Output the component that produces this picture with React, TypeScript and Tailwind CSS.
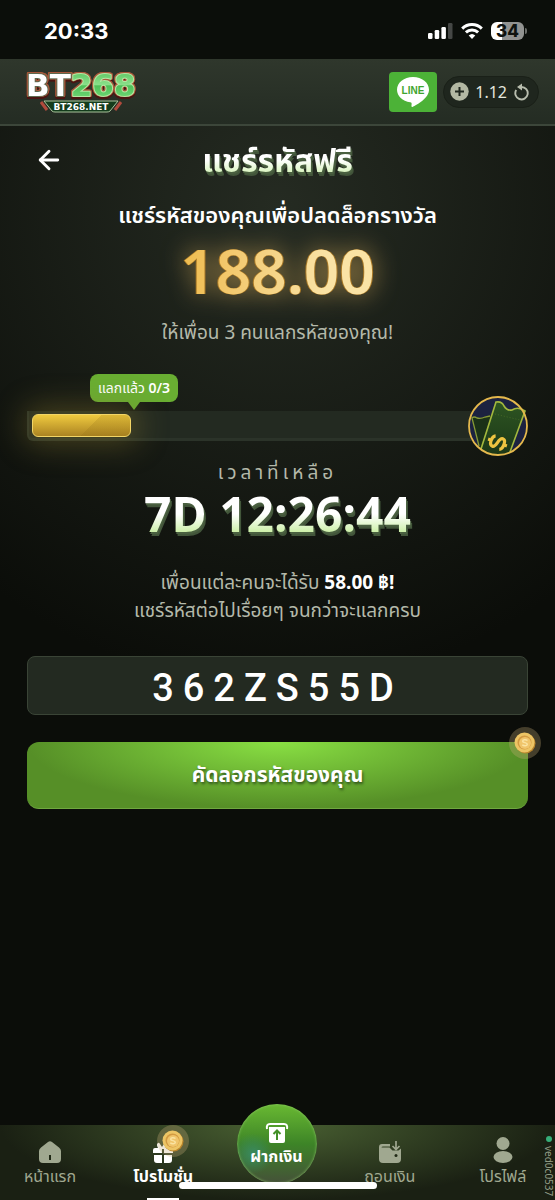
import React from 'react';
import { ArrowLeft } from 'lucide-react';
import { clsx } from 'clsx';

const TITLE_TEXT =
  'bg-gradient-to-b from-white from-50% to-[#cdf0a8] to-85% bg-clip-text text-transparent font-bold [filter:drop-shadow(1px_2px_0_#4a6040)_drop-shadow(1px_2px_0_#42553a)]';

function StatusBar() {
  return (
    <div className="flex h-[59px] items-center justify-between bg-[#0b0e0a] pl-11 pr-7 pt-[2px] text-white">
      <span className="font-[Inter,sans-serif] text-[22px] font-bold leading-6">20:33</span>
      <div className="flex items-center gap-2">
        <svg width="25" height="16" viewBox="0 0 25 16" fill="white">
          <rect x="0" y="10" width="4.500" height="6" rx="1.3" />
          <rect x="6.7" y="7" width="4.500" height="9" rx="1.3" />
          <rect x="13.4" y="4" width="4.500" height="12" rx="1.3" />
          <rect x="20" y="0" width="4.500" height="16" rx="1.3" fill="#454745" />
        </svg>
        <svg width="22" height="16" viewBox="0 0 22 16" fill="none" stroke="white" strokeWidth="3">
          <path d="M1.2 5.6a14 14 0 0 1 19.6 0" />
          <path d="M4.9 9.4a8.700 8.700 0 0 1 12.2 0" />
          <path d="M11 16l-3.300-3.500a4.800 4.800 0 0 1 6.600 0z" fill="white" stroke="none" />
        </svg>
        <div className="flex items-center gap-px">
          <div className="flex h-[18px] w-[33px] items-center justify-center rounded-md bg-[linear-gradient(to_right,#ffffff_34%,#929391_34%)] font-[Inter,sans-serif] text-[17px] font-extrabold leading-4 text-[#10130f]">
            34
          </div>
          <div className="h-[6px] w-[2px] rounded-r bg-[#6b6d6a]" />
        </div>
      </div>
    </div>
  );
}

function Logo() {
  return (
    <svg width="116" height="52" viewBox="0 0 116 52" fontFamily="DejaVu Sans, sans-serif" fontWeight="bold">
      <defs>
        <linearGradient id="logoGreen" x1="0" y1="0" x2="0" y2="1">
          <stop offset="0" stopColor="#4fbe57" />
          <stop offset="0.5" stopColor="#8be08a" />
          <stop offset="0.52" stopColor="#4dbf58" />
          <stop offset="1" stopColor="#7ce07f" />
        </linearGradient>
      </defs>
      <text
        x="2"
        y="30"
        fontSize="31"
        fill="white"
        stroke="#5d6a4f"
        strokeWidth="2"
        strokeLinejoin="round"
        paintOrder="stroke"
        className="[filter:drop-shadow(1px_0_0_#a8573a)_drop-shadow(-1px_0_0_#a8573a)_drop-shadow(0_-1px_0_#a8573a)_drop-shadow(0_2px_0_#4a1511)]"
      >
        BT
        <tspan fill="url(#logoGreen)" stroke="#b5e8a4">
          268
        </tspan>
      </text>
      <path d="M17 36l6 8M97 36l-6 8" stroke="#b04a3c" strokeWidth="3" />
      <path d="M20 35h74l-8 10q-1 1-3 1H31q-2 0-3-1z" fill="#143c1c" stroke="#a9c49b" strokeWidth="1" />
      <text x="57" y="44" fontSize="9" fill="white" textAnchor="middle">
        BT268.NET
      </text>
    </svg>
  );
}

function Header() {
  return (
    <header className="flex h-[67px] items-center justify-between border-b-2 border-[#3c463a] bg-gradient-to-b from-[#2f372c] to-[#242c23] pl-6 pr-4">
      <a href="#home" aria-label="BT268">
        <Logo />
      </a>
      <div className="flex items-center gap-[6px]">
        <a href="#line" aria-label="LINE" className="flex h-10 w-12 items-center justify-center rounded bg-[#4cb237]">
          <svg width="34" height="32" viewBox="0 0 34 32">
            <path
              d="M17 1C8 1 1 6.700 1 13.700c0 6.300 5.600 11.500 13.200 12.600 1.500.3 1.600 1 1.300 3-.1.800-.1 2 .9 1.600C21 28.800 33 22 33 13.700 33 6.700 26 1 17 1z"
              fill="white"
            />
            <text x="17" y="18" fontSize="10" fontWeight="bold" textAnchor="middle" fill="#3fa52f" fontFamily="Liberation Sans, sans-serif">
              LINE
            </text>
          </svg>
        </a>
        <div className="flex h-8 items-center rounded-full border border-[#1a2018] bg-[#1f261e] pl-[6px] pr-2">
          <button aria-label="Add funds" className="mr-[6px]">
            <svg width="19" height="19" viewBox="0 0 19 19">
              <circle cx="9.500" cy="9.500" r="9.200" fill="#b3b8a3" />
              <path d="M9.500 5v9M5 9.500h9" stroke="#20271f" strokeWidth="2" />
            </svg>
          </button>
          <span className="text-base leading-6 text-[#e4e7df]">1.12</span>
          <button aria-label="Refresh balance" className="ml-[6px]">
            <svg width="17" height="18" viewBox="0 0 17 18">
              <path d="M8.500 4A6.200 6.200 0 1 1 3.200 7" fill="none" stroke="#b8bdae" strokeWidth="1.900" />
              <path d="M4 4l5-3.500v7z" fill="#b8bdae" />
            </svg>
          </button>
        </div>
      </div>
    </header>
  );
}

function Coin({ className }: { className?: string }) {
  return (
    <span className={clsx('flex h-8 w-8 items-center justify-center rounded-full bg-[#c9b07a]/30', className)}>
      <svg width="22" height="22" viewBox="0 0 22 22">
        <circle cx="11.500" cy="11.500" r="10" fill="#b9852c" />
        <circle cx="10.500" cy="10.500" r="10" fill="#edc565" />
        <circle cx="10.500" cy="10.500" r="7" fill="#d39a41" />
        <circle cx="11" cy="11" r="6" fill="#f0c56b" />
        <path d="M13.500 8.500c-2-1.500-5-.8-4.800.8.2 1.700 4.600 1 4.600 3 0 1.800-3.300 1.900-5 .6" fill="none" stroke="#fae3a2" strokeWidth="1.500" />
      </svg>
    </span>
  );
}

function TicketBadge() {
  return (
    <svg width="60" height="60" viewBox="0 0 60 60">
      <defs>
        <linearGradient id="ticket" x1="0" y1="0" x2="0" y2="1">
          <stop offset="0" stopColor="#2d5522" />
          <stop offset="1" stopColor="#1c3717" />
        </linearGradient>
        <clipPath id="badgeClip">
          <circle cx="30" cy="30" r="28.500" />
        </clipPath>
      </defs>
      <circle cx="30" cy="30" r="29" fill="#1c2240" />
      <g clipPath="url(#badgeClip)">
        <path d="M4 22q2-2 5 0 4 1 8-1 4-2 7-2L13 56z" fill="#1b3117" />
        <path d="M11 50L4 22q2-2 5 0 4 1 8-1l5-1" fill="none" stroke="#879a35" strokeWidth="1.300" />
        <path d="M28 6q6-1 8 4 3 5 8 4 6-3 13 1L40 60H10z" fill="url(#ticket)" />
      </g>
      <path d="M13 53L28 6q6-1 8 4 3 5 8 4 6-4 13 1L42 56" fill="none" stroke="#a3b83e" strokeWidth="1.600" />
      <path d="M27 18l25 6" stroke="#456a26" strokeWidth="1" strokeDasharray="1 2" />
      <circle cx="30" cy="30" r="29" fill="none" stroke="#e5b94d" strokeWidth="1.800" />
      <g transform="translate(29.500 46.500) rotate(-70)" fill="none" stroke="#eec441" strokeWidth="3.200">
        <path d="M5.500-4C4-7.500-5-7.800-5.200-3.500-5.300.8 5.300-.8 5.300 3.700 5.200 8-4.500 7.500-5.800 4" />
        <path d="M0-10v4M0 6v4" />
      </g>
    </svg>
  );
}

function Progress() {
  return (
    <div className="mt-7">
      <div className="ml-[63px] flex w-[88px] flex-col items-center">
        <div className="flex h-7 w-full items-center justify-center rounded-lg bg-[#69ae32] text-sm leading-5 text-white">
          <span>
            แลกแล้ว <b className="font-semibold">0/3</b>
          </span>
        </div>
        <svg width="12" height="8" viewBox="0 0 12 8">
          <path d="M0 0h12L6 8z" fill="#69ae32" />
        </svg>
      </div>
      <div className="-mt-[14px] flex items-center">
        <div
          role="progressbar"
          aria-label="แลกแล้ว"
          aria-valuemin={0}
          aria-valuemax={3}
          aria-valuenow={0}
          className="-mr-8 h-[30px] flex-1 rounded-bl-md border-b-[3px] border-l-2 border-[#2b3329] bg-[#232a21] p-[3px]"
        >
          <div className="h-[23px] w-[99px] rounded-md border border-[#f2d566] bg-[linear-gradient(135deg,transparent_58%,#8c6a1230_58%),linear-gradient(to_bottom,#efca3f,#ab8322)] shadow-[0_0_30px_8px_#8b7b2f68]" />
        </div>
        <TicketBadge />
      </div>
    </div>
  );
}

function HomeIcon() {
  return (
    <svg width="22" height="22" viewBox="0 0 22 22">
      <path d="M2 6.500L9 1q2-1.500 4 0l7 5.500q2 1.500 2 3.500v8q0 4-4 4H4q-4 0-4-4v-8q0-2 2-3.500z" fill="currentColor" />
      <path d="M11 14v5" stroke="#1f2815" strokeWidth="2" />
    </svg>
  );
}

function GiftIcon() {
  return (
    <svg width="22" height="22" viewBox="0 0 22 22" fill="currentColor">
      <path d="M6 2q-2 1 0 5H3Q1 7 1 9v3h9V8h2v4h9V9q0-2-2-2h-7q5 0 4-4-1-2-4 0l-2 3-2-3Q7 1 6 2zM2 14h8v8H5q-3 0-3-3zM12 14h8v5q0 3-3 3h-5z" />
    </svg>
  );
}

function WalletIcon() {
  return (
    <svg width="22" height="22" viewBox="0 0 22 22">
      <path
        d="M3 3h8v2.500H4q-1.500 0-1.500 1h8l3 3h6L22 7.500V18q0 4-4 4H4q-4 0-4-4V6q0-3 3-3z"
        fill="currentColor"
      />
      <path d="M17 0v8M13.500 5l3.500 3.500L20.500 5" fill="none" stroke="currentColor" strokeWidth="1.700" />
      <circle cx="17" cy="14.500" r="1.500" fill="#202a16" />
    </svg>
  );
}

function ProfileIcon() {
  return (
    <svg width="20" height="26" viewBox="0 0 20 26" fill="currentColor">
      <circle cx="10" cy="6.500" r="6.500" />
      <ellipse cx="10" cy="20" rx="9.500" ry="6" />
    </svg>
  );
}

const navItems = [
  { label: 'หน้าแรก', href: '#home', icon: <HomeIcon /> },
  { label: 'โปรโมชั่น', href: '#promotions', icon: <GiftIcon />, active: true },
  { label: 'ฝากเงิน', href: '#deposit', icon: null, main: true },
  { label: 'ถอนเงิน', href: '#withdraw', icon: <WalletIcon /> },
  { label: 'โปรไฟล์', href: '#profile', icon: <ProfileIcon /> },
];

function BottomNav() {
  return (
    <nav className="relative mt-auto flex h-[75px] items-start justify-between bg-[#1a2013] bg-[radial-gradient(ellipse_50%_100%_at_50%_0,#496032,transparent)] pl-[18px] pr-5">
      {navItems.map((item) =>
        item.main ? (
          <a
            key={item.label}
            href={item.href}
            className="-mx-2 -mt-[21px] flex h-20 w-20 flex-col items-center rounded-full bg-[radial-gradient(circle_at_20%_62%,#398a60_0%,transparent_25%),linear-gradient(to_bottom,#69b932,#3d8427_50%,#455039)] pt-[19px] text-white shadow-[inset_0_0_3px_#91c96d]"
          >
            <svg width="24" height="21" viewBox="0 0 24 21">
              <path d="M2 6q-1-5 3-5h14q4 0 3 5" fill="none" stroke="white" strokeWidth="2" />
              <path d="M4 4h16v14q0 2-2 2H6q-2 0-2-2z" fill="white" />
              <path d="M12 17V8M8.500 11L12 7.500l3.500 3.500" fill="none" stroke="#439028" strokeWidth="2" />
            </svg>
            <span className="text-base font-bold leading-6">{item.label}</span>
          </a>
        ) : (
          <a
            key={item.label}
            href={item.href}
            className={clsx(
              'relative flex h-full w-16 flex-col items-center whitespace-nowrap text-base leading-6',
              item.active ? 'font-bold text-white' : 'text-[#a0a890]'
            )}
          >
            <span className="flex h-[38px] items-end">{item.icon}</span>
            <span className="mt-px">{item.label}</span>
            {item.active && (
              <>
                <Coin className="absolute left-[26px] top-0" />
                <span className="mt-auto h-[2px] w-8 bg-white" />
              </>
            )}
          </a>
        )
      )}
      <span className="absolute bottom-1 right-0 flex items-center gap-1 text-[10px] leading-3 text-[#929d86] [writing-mode:vertical-rl]">
        <i className="h-[6px] w-[6px] rounded-full bg-[#36ad79]" />
        ved0c0537
      </span>
      <div className="absolute bottom-[11px] left-1/2 h-[7px] w-[198px] -translate-x-1/2 rounded-full bg-white" />
    </nav>
  );
}

export default function App() {
  return (
    <div className="flex min-h-screen flex-col bg-[#0b0d09] font-['Noto_Sans','Noto_Sans_Thai',sans-serif] text-white">
      <StatusBar />
      <Header />
      <main className="flex flex-1 flex-col bg-[radial-gradient(ellipse_85%_480px_at_50%_80px,#252b22,transparent)] px-[27px] pb-8">
        <div className="grid h-[68px] grid-cols-[44px_1fr_44px] items-center">
          <button aria-label="Back" className="flex h-11 w-11 items-center justify-center">
            <ArrowLeft size={30} strokeWidth={2.3} />
          </button>
          <h1 className={clsx(TITLE_TEXT, 'text-center text-[32px] leading-[48px]')}>แชร์รหัสฟรี</h1>
        </div>

        <section className="text-center">
          <h2 className="mt-1 text-[22px] font-semibold leading-8">แชร์รหัสของคุณเพื่อปลดล็อกรางวัล</h2>
          <p className="bg-gradient-to-r from-[#eeba4a] from-30% to-[#fae3a5] to-60% bg-clip-text text-[62px] font-semibold leading-[80px] text-transparent [filter:drop-shadow(1px_0_0_#a97927)_drop-shadow(-1px_0_0_#a97927)_drop-shadow(0_0_12px_#a18548)]">
            188.00
          </p>
          <p className="mt-2 text-[19px] leading-7 text-[#b4b9aa]">ให้เพื่อน 3 คนแลกรหัสของคุณ!</p>
        </section>

        <Progress />

        <section className="text-center">
          <p className="text-[19px] leading-8 tracking-[4px] text-[#b4b9aa]">เวลาที่เหลือ</p>
          <p className={clsx(TITLE_TEXT, 'text-[48px] leading-[52px]')}>7D 12:26:44</p>
          <p className="mt-7 text-[19px] leading-7 text-[#b4b9aa]">
            เพื่อนแต่ละคนจะได้รับ <b className="font-bold text-white">58.00 ฿!</b>
            <br />
            แชร์รหัสต่อไปเรื่อยๆ จนกว่าจะแลกครบ
          </p>
        </section>

        <input
          readOnly
          aria-label="รหัสของคุณ"
          value="362ZS55D"
          className="mt-8 h-[59px] w-full rounded-lg border border-[#3a4436] bg-[#232a21] pt-1 text-center font-[Roboto,sans-serif] text-[38px] font-medium tracking-[9px] text-white outline-none"
        />
        <button className="relative mt-[27px] h-[67px] rounded-xl border-b border-[#6fa83f] bg-[radial-gradient(ellipse_50%_100%_at_50%_0,#89e043,#568f27)] text-[21px] font-bold text-white [text-shadow:1px_2px_3px_#2c4d1a]">
          คัดลอกรหัสของคุณ
          <Coin className="absolute -right-[13px] -top-[15px]" />
        </button>
      </main>
      <BottomNav />
    </div>
  );
}
